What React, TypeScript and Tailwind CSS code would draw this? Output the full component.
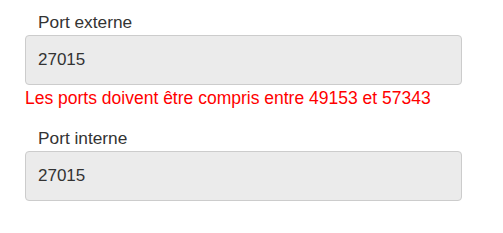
export default function App() {
  return (
    <div className="w-[503px] h-[233px] bg-white px-[25px] pt-[12px] font-['Liberation_Sans',Arial,sans-serif] text-[17px] leading-[20px]">
      <div className="w-[437px]">
        <label className="block pl-[13px] text-[17.3px] text-[#333333]">Port externe</label>
        <input
          readOnly
          value="27015"
          className="mt-[3px] block h-[50px] w-full rounded-[4px] border border-[#cccccc] bg-[#ebebeb] px-[12px] text-[#333333] outline-none"
        />
        <p className="mt-[3px] whitespace-nowrap text-[17.5px] text-[#ff0000]">
          Les ports doivent être compris entre 49153 et 57343
        </p>
        <label className="mt-[20px] block pl-[13px] text-[17.3px] text-[#333333]">Port interne</label>
        <input
          readOnly
          value="27015"
          className="mt-[3px] block h-[50px] w-full rounded-[4px] border border-[#cccccc] bg-[#ebebeb] px-[12px] text-[#333333] outline-none"
        />
      </div>
    </div>
  );
}
